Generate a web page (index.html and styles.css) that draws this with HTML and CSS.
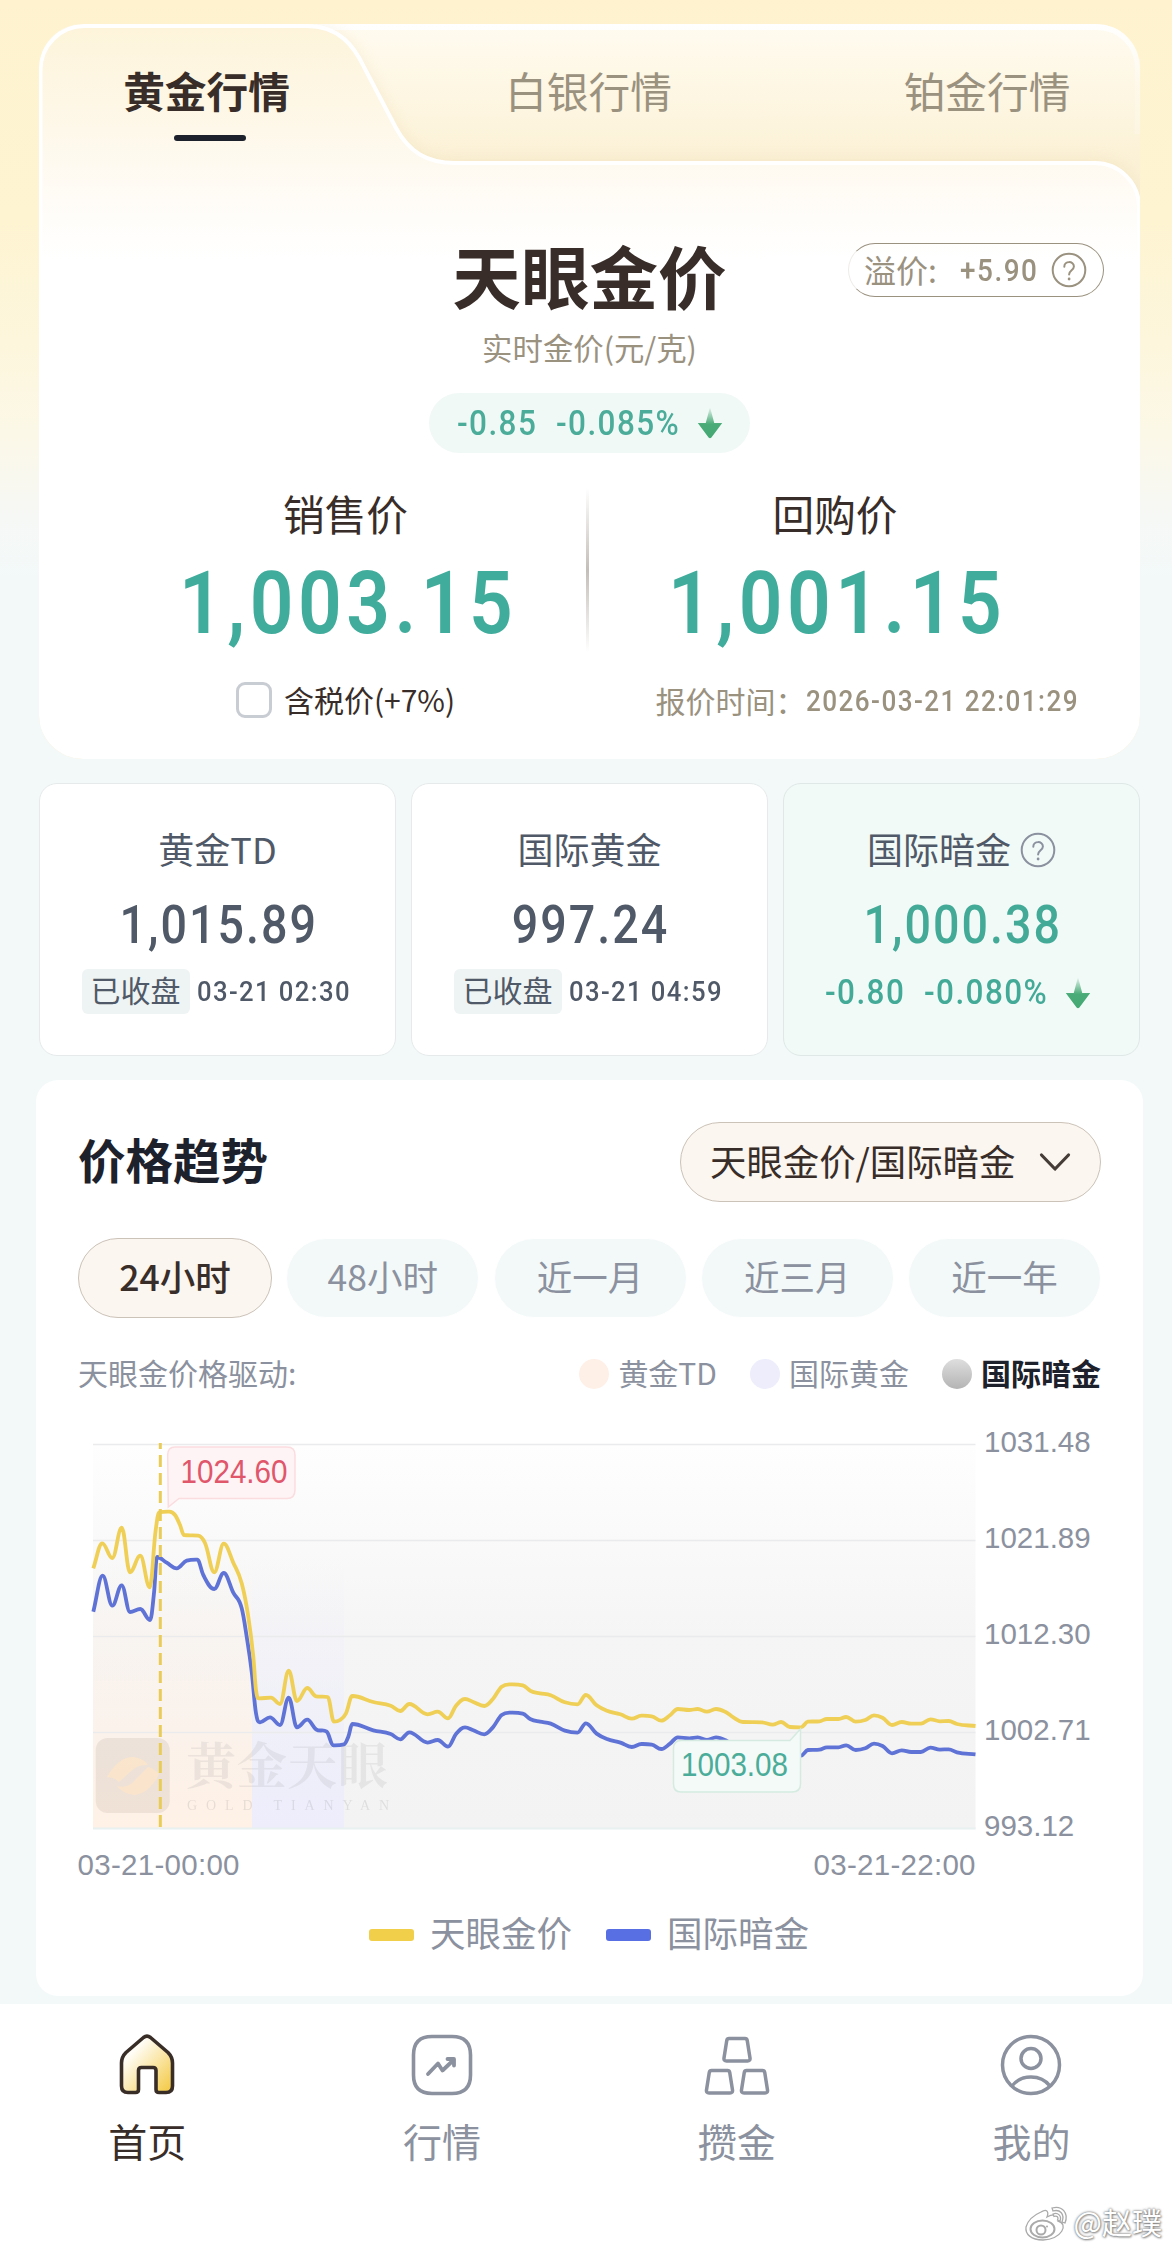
FILE: index.html
```html
<!DOCTYPE html>
<html lang="zh-CN">
<head>
<meta charset="utf-8">
<title>黄金行情</title>
<link rel="stylesheet" href="styles.css">
</head>
<body>
<svg class="defs" width="0" height="0" aria-hidden="true">
  <defs>
    <linearGradient id="arrow" x1="0" y1="0" x2="0" y2="1"><stop offset="0" stop-color="#4aab78" stop-opacity=".05"/><stop offset=".55" stop-color="#4aab78"/><stop offset="1" stop-color="#45a973"/></linearGradient>
    <symbol id="down" viewBox="0 0 26 34"><path d="M13 0 L17.500 17 H26 L14.500 32.500 Q13 34 11.500 32.500 L0 17 H8.500 Z" fill="url(#arrow)"/></symbol>
    <symbol id="help" viewBox="0 0 36 36"><circle cx="18" cy="18" r="16.300" fill="none" stroke="currentColor" stroke-width="2"/><path d="M13.300 14.800 C13.300 8.600 22.900 8.600 22.900 14.600 C22.900 18.200 18.100 18.600 18.100 22.600" fill="none" stroke="currentColor" stroke-width="2" stroke-linecap="round"/><circle cx="18.100" cy="27" r="1.400" fill="currentColor"/></symbol>
  </defs>
</svg>

<main class="page">
  <section class="quote">
    <svg class="quote-shape" width="1101" height="735" viewBox="0 0 1101 735" aria-hidden="true">
      <defs>
        <linearGradient id="back" x1="0" y1="0" x2="0" y2="180" gradientUnits="userSpaceOnUse"><stop offset="0" stop-color="#fffbf0"/><stop offset=".5" stop-color="#fdf5df"/><stop offset=".76" stop-color="#fbf1d6"/><stop offset="1" stop-color="#faf0d6"/></linearGradient>
        <linearGradient id="front" x1="0" y1="0" x2="0" y2="235" gradientUnits="userSpaceOnUse"><stop offset="0" stop-color="#fdf4da"/><stop offset=".45" stop-color="#fef8ea"/><stop offset=".75" stop-color="#fffcf7"/><stop offset="1" stop-color="#fff"/></linearGradient>
        <linearGradient id="rim" x1="0" y1="0" x2="0" y2="60" gradientUnits="userSpaceOnUse"><stop offset="0" stop-color="#fff"/><stop offset="1" stop-color="#fff" stop-opacity=".2"/></linearGradient>
        <filter id="soft" x="-10%" y="-10%" width="120%" height="120%"><feGaussianBlur stdDeviation="8"/></filter>
        <clipPath id="clip"><rect width="1101" height="735" rx="44"/></clipPath>
      </defs>
      <g clip-path="url(#clip)">
        <rect width="1101" height="735" fill="url(#back)"/>
        <path d="M250 3 H1057 A41 41 0 0 1 1099 44 V110" fill="none" stroke="url(#rim)" stroke-width="6"/>
        <path d="M2 46 A44 44 0 0 1 46 2 H268 C300 2 315 22 325 43 L357 104 C370 128 388 138 416 138 H1057 A43 43 0 0 1 1100 181 V735 H2 Z" fill="#e3c68a" opacity=".26" filter="url(#soft)"/>
        <path d="M1.500 46 A44 44 0 0 1 46 2 H268 C300 2 315 22 325 43 L357 104 C370 128 388 139 416 139 H1056 A44 44 0 0 1 1100 183 V760 H1.500 Z" fill="url(#front)" stroke="#fff" stroke-width="4"/>
      </g>
    </svg>
    <div class="quote-body">
      <nav class="tabs">
        <div class="tab tab-on"><span>黄金行情</span><i></i></div>
        <div class="tab"><span>白银行情</span></div>
        <div class="tab tab-last"><span>铂金行情</span></div>
      </nav>
      <div class="headline">
        <h1>天眼金价</h1>
        <div class="premium"><span>溢价:</span><b>+5.90</b><svg width="36" height="36"><use href="#help"/></svg></div>
      </div>
      <p class="unit">实时金价(元/克)</p>
      <div class="change"><span class="c1">-0.85</span><span class="c2">-0.085%</span><svg width="26" height="32"><use href="#down"/></svg></div>
      <div class="prices">
        <div class="price"><h2>销售价</h2><strong>1,003.15</strong><label class="tax"><span class="box"></span>含税价(+7%)</label></div>
        <div class="rule"></div>
        <div class="price price-buy"><h2>回购价</h2><strong>1,001.15</strong><p class="time">报价时间：<b>2026-03-21 22:01:29</b></p></div>
      </div>
    </div>
  </section>

  <section class="markets">
    <article class="market"><h3>黄金TD</h3><strong>1,015.89</strong><p class="closed"><em>已收盘</em><b>03-21 02:30</b></p></article>
    <article class="market"><h3>国际黄金</h3><strong>997.24</strong><p class="closed"><em>已收盘</em><b>03-21 04:59</b></p></article>
    <article class="market market-on"><h3>国际暗金<svg width="36" height="36"><use href="#help"/></svg></h3><strong>1,000.38</strong><p class="move"><span class="c1">-0.80</span><span class="c2">-0.080%</span><svg width="26" height="32"><use href="#down"/></svg></p></article>
  </section>

  <section class="trend">
    <header class="trend-head">
      <h2>价格趋势</h2>
      <div class="select">天眼金价/国际暗金<svg width="32" height="20" viewBox="0 0 32 20"><path d="M2.500 3 L16 17 L29.500 3" fill="none" stroke="#453c38" stroke-width="3.200" stroke-linecap="round" stroke-linejoin="round"/></svg></div>
    </header>
    <div class="ranges">
      <span class="range range-on">24小时</span><span class="range">48小时</span><span class="range">近一月</span><span class="range">近三月</span><span class="range">近一年</span>
    </div>
    <div class="drivers">
      <span class="drivers-name">天眼金价格驱动:</span>
      <span class="driver"><i class="dot dot-td"></i>黄金TD</span>
      <span class="driver"><i class="dot dot-intl"></i>国际黄金</span>
      <span class="driver driver-on"><i class="dot dot-dark"></i>国际暗金</span>
    </div>
    <svg class="chart" width="1030" height="460" viewBox="78 1425 1030 460">
      <defs>
        <linearGradient id="gGray" x1="0" y1="0" x2="0" y2="1"><stop offset="0" stop-color="#fefefe"/><stop offset=".5" stop-color="#f5f5f5"/><stop offset="1" stop-color="#f3f3f3"/></linearGradient>
        <linearGradient id="gTd" x1="0" y1="0" x2="0" y2="1"><stop offset=".3" stop-color="#fff1e6" stop-opacity="0"/><stop offset="1" stop-color="#fff1e6"/></linearGradient>
        <linearGradient id="gIntl" x1="0" y1="0" x2="0" y2="1"><stop offset=".3" stop-color="#ededfc" stop-opacity="0"/><stop offset="1" stop-color="#ededfc"/></linearGradient>
      </defs>
      <rect x="93" y="1444" width="882.500" height="385" fill="url(#gGray)"/>
      <rect x="93" y="1444" width="159" height="385" fill="url(#gTd)"/>
      <rect x="252" y="1444" width="92" height="385" fill="url(#gIntl)"/>
      <path d="M93 1444.500 H975.500 M93 1540.500 H975.500 M93 1636.500 H975.500 M93 1732.500 H975.500" stroke="#e9ebec" stroke-width="1.300"/>
      <path d="M93 1828.500 H975.500" stroke="#e8f0f0" stroke-width="2"/>
      <g class="brand">
        <rect x="95.700" y="1738" width="74" height="75" rx="12" fill="#6b5545" opacity=".1"/>
        <path d="M107 1777 Q119 1756 134 1757 Q145 1759 148 1765 Q138 1764 130 1772 L119 1782 Q116 1778 107 1777 Z M159 1774 Q149 1794 134 1795 Q122 1793 117 1786 Q128 1789 135 1780 L148 1767 Q152 1767 159 1774 Z" fill="#fde5c8" opacity=".75"/>
        <text class="brand-cn" x="186" y="1784" textLength="202">黄金天眼</text>
        <text class="brand-en" x="187" y="1810" textLength="202">GOLD TIANYAN</text>
      </g>
      <path id="dark" fill="none" stroke="#5f73d6" stroke-width="3.800" stroke-linejoin="round"/>
      <path id="gold" fill="none" stroke="#efcf55" stroke-width="3.800" stroke-linejoin="round"/>
      <path d="M160.300 1443 V1828" stroke="#e9cb58" stroke-width="3" stroke-dasharray="12 6" stroke-dashoffset="6"/>
      <path d="M175 1447 H287 Q295 1447 295 1455 V1490 Q295 1498.500 287 1498.500 H179 L168.300 1507 L167.700 1455 Q167.700 1447 175 1447 Z" fill="#fff3f4" fill-opacity=".93" stroke="#fbdcdf" stroke-width="1.500"/>
      <text class="tip tip-high" x="180.500" y="1483" textLength="107" lengthAdjust="spacingAndGlyphs">1024.60</text>
      <path d="M681 1740.500 H790 L800.500 1729 V1784 Q800.500 1792 792 1792 H681 Q673.500 1792 673.500 1784 V1749 Q673.500 1740.500 681 1740.500 Z" fill="#f3faf7" stroke="#d5ebe1" stroke-width="1.500"/>
      <text class="tip tip-low" x="681" y="1776" textLength="107" lengthAdjust="spacingAndGlyphs">1003.08</text>
      <g class="axis">
        <text x="984" y="1451.500">1031.48</text><text x="984" y="1547.500">1021.89</text><text x="984" y="1643.500">1012.30</text><text x="984" y="1739.500">1002.71</text><text x="984" y="1835.500">993.12</text>
        <text x="77.500" y="1874.500" textLength="162">03-21-00:00</text><text x="813.500" y="1874.500" textLength="162">03-21-22:00</text>
      </g>
    </svg>
    <div class="legend"><span><i class="bar-gold"></i>天眼金价</span><span><i class="bar-dark"></i>国际暗金</span></div>
  </section>

  <nav class="dock">
    <a class="dock-item dock-on">
      <svg width="66" height="66" viewBox="0 0 66 66"><defs><linearGradient id="home" x1=".25" y1=".25" x2="1" y2="1"><stop offset="0" stop-color="#fffdf6"/><stop offset="1" stop-color="#f3c73c"/></linearGradient></defs><path d="M29.500 5.500 Q33 2.800 36.500 5.500 L54 20.500 Q58.500 25 58.500 31 V54 Q58.500 60.500 52 60.500 H45 Q42 60.500 42 57.500 V38.500 Q42 35.500 39 35.500 H27.500 Q24.500 35.500 24.500 38.500 V57.500 Q24.500 60.500 21.500 60.500 H14 Q7.500 60.500 7.500 54 V31 Q7.500 25 12 20.500 Z" fill="url(#home)" stroke="#392d28" stroke-width="3.600" stroke-linejoin="round"/></svg>
      <span>首页</span></a>
    <a class="dock-item">
      <svg width="66" height="66" viewBox="0 0 66 66" fill="none" stroke="#8b919e"><path d="M23 4.500 H43 Q61.500 4.500 61.500 23 V43 Q61.500 61.500 43 61.500 H23 Q4.500 61.500 4.500 43 V23 Q4.500 4.500 23 4.500 Z" stroke-width="3.600"/><path d="M19 42 L29 31.500 L33.500 38.500 L44 28.500 M38.500 27 H45 V33.500" stroke-width="3.800" stroke-linecap="round" stroke-linejoin="round"/></svg>
      <span>行情</span></a>
    <a class="dock-item">
      <svg width="66" height="66" viewBox="0 0 66 66" fill="none" stroke="#8b919e" stroke-width="3.500" stroke-linejoin="round"><path d="M25 6.500 H41 Q42.800 6.500 43.200 8.300 L46 26 Q46.400 29 43.500 29 H22.500 Q19.600 29 20 26 L22.800 8.300 Q23.200 6.500 25 6.500 Z M7.500 38.500 H23.500 Q25.300 38.500 25.700 40.300 L28.500 58 Q28.900 61 26 61 H5 Q2.100 61 2.500 58 L5.300 40.300 Q5.700 38.500 7.500 38.500 Z M42.500 38.500 H58.500 Q60.300 38.500 60.700 40.300 L63.500 58 Q63.900 61 61 61 H40 Q37.100 61 37.500 58 L40.300 40.300 Q40.700 38.500 42.500 38.500 Z"/></svg>
      <span>攒金</span></a>
    <a class="dock-item">
      <svg width="66" height="66" viewBox="0 0 66 66" fill="none" stroke="#8b919e" stroke-width="3.500"><circle cx="33" cy="33" r="28.500"/><circle cx="33" cy="26.500" r="10"/><path d="M14 54 Q21 45 33 45 Q45 45 52 54"/></svg>
      <span>我的</span></a>
  </nav>
  <footer class="credit">
    <svg width="46" height="40" viewBox="0 0 46 40"><g fill="#fff" stroke="#aaa" stroke-width="1.300"><path d="M17 9 C23 5 25 9 23 14 C30 10 37 12 34 18 C45 21 38 36 19 37 C7 37 1 31 2 24 C4 17 10 12 17 9 Z"/><path d="M28 5 C38 2 45 10 41 20 L38 19 C41 11 36 6 29 8 Z M29 11 C34 9 38 13 36 18 L33.500 17 C35 14 33 12.500 30 13.500 Z"/></g><ellipse cx="18.500" cy="26" rx="12" ry="8.500" fill="#fff" stroke="#aaa" stroke-width="2"/><circle cx="17" cy="27" r="4.500" fill="none" stroke="#aaa" stroke-width="2"/><circle cx="23" cy="23.500" r="1" fill="#aaa"/></svg>
    <span>@赵璞</span>
  </footer>
</main>
<script src="chart.js"></script>
</body>
</html>
```
FILE: chart.js
```js
// Both price series as x,y pairs in chart units.
const tail = [373.3,1702,390.7,1705.7,400.3,1711,409.3,1704,427.7,1714.3,437.7,1711.7,448,1718.3,456,1705.7,465,1699,473.3,1702,484.3,1706,492.7,1699.3,501.7,1686.7,510.7,1684.3,522.7,1685.3,530.7,1691,540,1693.3,550.7,1695.3,564.9,1702.3,577.5,1704.3,585.9,1695,596.6,1705.3,607,1710.7,620.4,1714.3,631.8,1718.7,641.4,1715.7,651.7,1716.3,661.3,1720.7,670,1715.3,677.8,1709,689.3,1710,697.7,1709,706.9,1711.7,716,1709,725.6,1712,733.3,1717.3,742.8,1722,762,1722.3,772.7,1724.7,781.1,1722,789.9,1727,801,1727.3,807.9,1721.7,819.4,1721.3,827,1719,838.5,1719,846.2,1717,855.7,1721.7,865.3,1720,874,1715.3,882.5,1717.7,892,1725,901.7,1722,911.2,1723.7,920.8,1723.7,930.4,1719.3,939.9,1721.3,948.7,1721,957,1724,975.5,1726];
const goldHead = [93.3,1568.3,102.3,1543.3,112.3,1558,121.7,1527.7,130,1572.3,140.3,1555.7,149.7,1587.3,155.7,1530,159.3,1512.3,169.3,1511.7,175,1515,180,1525,184,1535,198.3,1535.7,205,1543,214.3,1572.3,223.7,1543.7,233.3,1562.7,241.7,1583.3,248.3,1616.7,253.3,1656.7,256,1690,259.3,1698.3,271,1697.7,280,1704,288.7,1670.7,297,1701,307.3,1688,316,1696.3,327.7,1697,334,1721.7,340,1720,346,1713.3,352.3,1696];
const darkHead = [93.3,1611.7,102.7,1575.7,112.3,1605.7,121.7,1585.3,130,1612,140.3,1609,150,1620,154,1593,157,1557,166.7,1562.7,176.7,1568.3,186.7,1560.7,197.3,1559.7,203.3,1575,214.3,1589,223.7,1573,233.3,1592.7,241.7,1608.3,246.7,1636.7,251.7,1671.7,256,1713.3,260,1722.3,270,1717.3,280,1725,288.7,1697.7,297,1727.3,307.3,1719.7,316,1729.3,326.7,1731.7,333.3,1745.3,344,1744.3,348.3,1736.7,352.3,1724];

function curve(v) {
  const p = [];
  for (let i = 0; i < v.length; i += 2) p.push([v[i], v[i + 1]]);
  const s = p.slice(1).map((q, i) => (q[1] - p[i][1]) / (q[0] - p[i][0]));
  const m = p.map((_, i) => {
    if (i === 0) return s[0];
    if (i === p.length - 1) return s[i - 1];
    if (s[i - 1] * s[i] <= 0) return 0;
    const limit = 3 * Math.min(Math.abs(s[i - 1]), Math.abs(s[i]));
    const mean = (s[i - 1] + s[i]) / 2;
    return Math.sign(mean) * Math.min(Math.abs(mean), limit);
  });
  let d = `M${p[0]}`;
  for (let i = 1; i < p.length; i++) {
    const h = (p[i][0] - p[i - 1][0]) / 2.6;
    d += `C${p[i - 1][0] + h} ${p[i - 1][1] + m[i - 1] * h} ${p[i][0] - h} ${p[i][1] - m[i] * h} ${p[i]}`;
  }
  return d;
}
document.getElementById('gold').setAttribute('d', curve(goldHead.concat(tail)));
document.getElementById('dark').setAttribute('d', curve(darkHead.concat(tail.map((n, i) => i % 2 ? n + 28.3 : n))));
```
FILE: styles.css
```css
* { box-sizing: border-box; }
body, h1, h2, h3, p { margin: 0; font-weight: 400; }
body { font-family: "Noto Sans CJK SC", sans-serif; color: #382d28; background: #f3f9f9; }
b, strong, em, i { font-style: normal; font-weight: 500; }
svg { display: block; flex: none; }
.defs { position: absolute; }

/* figures: condensed, openly spaced */
b, strong, .c1, .c2 { flex: none; font-family: Roboto, sans-serif; font-weight: 500; transform: scaleX(.9); transform-origin: left; }
b { letter-spacing: .055em; }
.c1, .c2 { width: 79px; letter-spacing: .045em; }
.c2 { width: 125px; margin-left: 20px; }

.page {
  width: 1172px; height: 2251px; padding-top: 24px; overflow: hidden; position: relative;
  display: flex; flex-direction: column; white-space: nowrap;
  background: linear-gradient(#fff3cf 0, #fef4d2 220px, #fdf6dc 340px, #fcf8e7 430px, #f6f8f6 520px, #f3f9f9 580px);
}

/* quote card */
.quote { position: relative; width: 1101px; height: 735px; margin-left: 39px; flex: none; }
.quote-shape { position: absolute; inset: 0; }
.quote-body { position: relative; }
.tabs { display: grid; grid-template-columns: 337px 427px 337px; height: 138px; padding-top: 36px; }
.tab { display: flex; flex-direction: column; align-items: center; font-size: 41.7px; line-height: 60px; color: #9a917f; }
.tab span { margin-left: -2px; }
.tab-on { font-weight: 700; color: #382d28; }
.tab-last { padding-left: 33px; }
.tab i { width: 72px; height: 6px; margin: 15px 0 0 5px; border-radius: 3px; background: #1d212b; }
.headline { display: grid; grid-template-columns: 1fr auto 1fr; margin-top: 76px; }
.headline h1 { grid-column: 2; font-size: 68.6px; line-height: 72px; font-weight: 700; }
.premium {
  justify-self: end; margin: 5px 36px 0 0; width: 256px; height: 54px; padding: 0 16px 0 15px;
  display: flex; align-items: center; border: 1.5px solid #9a917f; border-left-color: #eeece9; border-radius: 27px;
  color: #9a917f; font-size: 32px; line-height: 46px;
}
.premium span { margin-top: -3px; }
.premium b { width: 78px; font-size: 31px; margin: 2px 13px 0 auto; }
.unit { margin-top: 17px; font-size: 30.4px; line-height: 40px; text-align: center; color: #9a917f; }
.change {
  width: 321px; height: 60px; margin: 26px auto 0; padding: 0 27px 0 28px; display: flex; align-items: center;
  border-radius: 30px; background: #f1f9f7; color: #4aac99; font-size: 35px;
}
.change svg { margin-left: auto; }
.prices { display: flex; margin: 35px 0 0 65px; }
.price { width: 483px; display: flex; flex-direction: column; align-items: center; }
.price-buy { width: 496px; }
.price h2 { font-size: 41.7px; line-height: 50px; }
.price strong { margin: 20px -5px 0 0; font-size: 87px; line-height: 90px; font-weight: 600; color: #40ac9b; letter-spacing: .059em; transform: scaleX(.88); transform-origin: center; }
.rule { width: 3px; height: 164px; margin: 0 -1.5px; background: linear-gradient(#cdc7c100, #c4beb8 50%, #cdc7c100); }
.tax, .time { margin-top: 30.5px; display: flex; align-items: center; font-size: 30px; line-height: 40px; }
.box { width: 36px; height: 36px; margin: 2px 12px 0 0; border: 3px solid #c8ccd3; border-radius: 9px; }
.time { padding-left: 62px; color: #9a917f; }
.time b { width: 271px; font-size: 29px; margin-top: 2px; }

/* market cards */
.markets { display: grid; grid-template-columns: repeat(3, 1fr); gap: 15px; margin: 24px 32px 0 39px; }
.market {
  height: 273px; padding-top: 41px; display: flex; flex-direction: column; align-items: center;
  border: 1.5px solid #e6eaeb; border-radius: 18px; background: #fff; color: #505967;
}
.market-on { background: #f2faf8; border-color: #dfe8e6; }
.market h3 { display: flex; align-items: center; font-size: 36px; line-height: 46px; }
.market h3 svg { margin: 4px 0 0 9px; color: #8b919e; }
.market strong { margin: 24px -3px 0 0; font-size: 53px; line-height: 60px; letter-spacing: .043em; transform: scaleX(.88); transform-origin: center; }
.market-on strong, .move { color: #43aa98; }
.closed { display: flex; align-items: center; gap: 7px; margin-top: 14px; }
.closed em { width: 108px; height: 45px; border-radius: 6px; background: #eef3f4; font-weight: 400; font-size: 30px; line-height: 40px; text-align: center; }
.closed b { width: 157px; font-size: 28.5px; }
.move { display: flex; align-items: center; margin: 17px 0 0 -7px; font-size: 35px; line-height: 42px; }
.move svg { margin-left: 16px; }

/* trend card */
.trend { width: 1107px; height: 916px; margin: 24px 0 0 36px; flex: none; padding: 42px 42px 0; border-radius: 22px; background: #fff; }
.trend-head { display: flex; justify-content: space-between; }
.trend-head h2 { font-size: 47.5px; line-height: 74px; font-weight: 700; color: #1d212b; }
.select {
  width: 421px; height: 80px; padding: 0 29px 5px; display: flex; align-items: center; justify-content: space-between;
  border: 1.5px solid #cbc2b8; border-radius: 40px; background: #fbf6f0; font-size: 36.4px;
}
.select svg { margin-top: 4px; }
.ranges { display: flex; justify-content: space-between; margin-top: 36px; }
.range { width: 193px; height: 80px; border: 1px solid #fff; border-radius: 40px; background: #f3f9f9; font-size: 35.5px; line-height: 74px; text-align: center; color: #8b919e; }
.range-on { width: 194px; background: #fbf6f0; border: 1.5px solid #cbc2b8; color: #382d28; font-weight: 500; }
.drivers { display: flex; align-items: center; gap: 33px; height: 44px; margin-top: 35px; font-size: 30px; line-height: 40px; color: #8b919e; }
.drivers-name { margin: -6px auto 0 0; }
.driver { display: flex; align-items: center; margin-top: -6px; }
.driver-on { font-weight: 700; color: #1d212b; }
.dot { width: 30px; height: 30px; margin: 4px 9px 0 0; border-radius: 50%; }
.dot-td { background: #fef0e7; }
.dot-intl { background: #ededfb; }
.dot-dark { background: linear-gradient(#dedede, #b4b4b4); }
.chart { margin-top: 28px; }
.axis { font: 29.5px "Liberation Sans", sans-serif; fill: #8b919e; }
.tip { font: 32.5px "Liberation Sans", sans-serif; }
.tip-high { fill: #e0566b; }
.tip-low { fill: #4aac99; }
.brand-cn { font: 700 50px "Noto Serif CJK SC", "Noto Sans CJK SC", serif; fill: #6b6b70; opacity: .1; }
.brand-en { font: 14px "Liberation Serif", serif; fill: #6b6b70; opacity: .15; }
.legend { display: flex; gap: 34px; margin: 22px 0 0 291px; font-size: 35.5px; line-height: 50px; color: #8b919e; }
.legend span { display: flex; align-items: center; }
.legend i { width: 45px; height: 12px; margin: 5px 16px 0 0; border-radius: 3px; }
.bar-gold { background: #f1cf4a; }
.bar-dark { background: #586fe4; }

/* bottom navigation */
.dock { display: grid; grid-template-columns: repeat(4, 294.7px); width: 1180px; height: 247px; margin-top: 8px; padding-top: 28px; flex: none; background: #fff; }
.dock-item { display: flex; flex-direction: column; align-items: center; font-size: 39px; line-height: 56px; color: #8b919e; }
.dock-item span { margin-top: 14px; }
.dock-on { color: #382d28; }

/* author mark laid over the page corner */
.credit { position: absolute; right: 10px; bottom: 8px; display: flex; align-items: center; gap: 4px; color: #fff; font-size: 30px; line-height: 40px; }
.credit span { margin-top: -5px; text-shadow: 0 0 2px #777, 1px 1px 2px #999, 0 0 3px #aaa; }
```
